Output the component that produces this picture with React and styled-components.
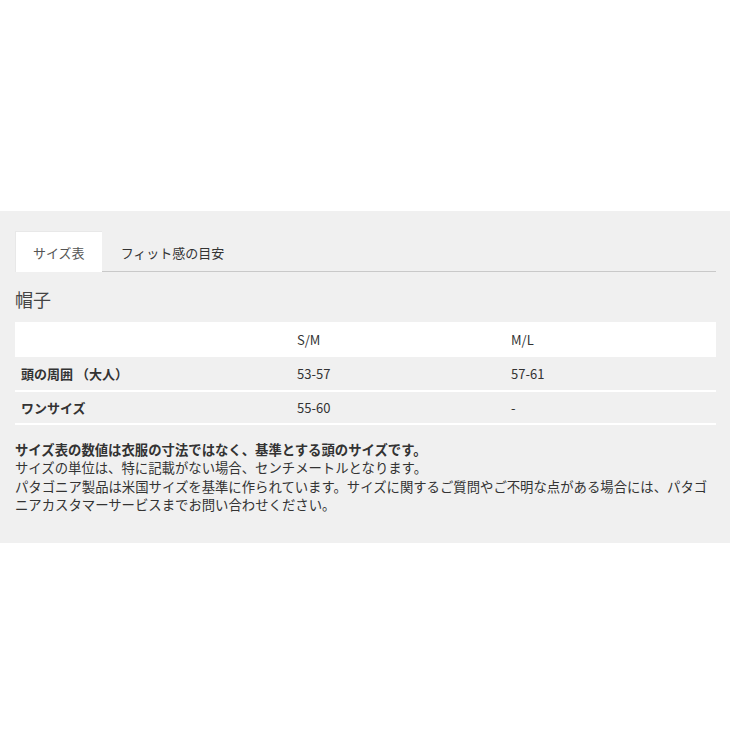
import React from "react";
import styled, { createGlobalStyle } from "styled-components";

const GlobalStyle = createGlobalStyle`
  html, body {
    margin: 0;
    padding: 0;
    background: #fff;
  }
  body {
    font-family: "Noto Sans CJK JP", "Noto Sans", sans-serif;
    color: #333;
  }
`;

const Page = styled.div`
  padding: 211px 0 186px;
  background: #fff;
`;

const Panel = styled.section`
  background: #f0f0f0;
  padding: 20px 14px 29px 15px;
`;

const TabBar = styled.div`
  display: flex;
  gap: 1px;
  border-bottom: 1px solid #c9c9c9;
  height: 40px;
`;

const Tab = styled.div`
  display: flex;
  align-items: center;
  height: 41px;
  box-sizing: border-box;
  padding: 0 17px;
  margin-bottom: -1px;
  font-size: 13px;
  color: ${(p) => (p.$active ? "#555" : "#333")};
  background: ${(p) => (p.$active ? "#fff" : "transparent")};
  border-top: 1px solid ${(p) => (p.$active ? "#e8e8e8" : "transparent")};
  border-left: 1px solid ${(p) => (p.$active ? "#e8e8e8" : "transparent")};
`;

const Heading = styled.h2`
  margin: 15px 0 11px;
  font-size: 18px;
  line-height: 24px;
  font-weight: 400;
  color: #444;
`;

const Table = styled.table`
  width: 100%;
  border-collapse: collapse;
  table-layout: fixed;
  font-size: 13px;
`;

const HeadRow = styled.tr`
  background: #fff;
  height: 35px;
`;

const BodyRow = styled.tr`
  border-bottom: 2px solid #fff;
  height: 33.5px;
`;

const Cell = styled.td`
  padding: 0 6px;
  vertical-align: middle;
  width: ${(p) => p.$w || "auto"};
  font-weight: ${(p) => (p.$bold ? 700 : 400)};
  color: #333;
`;

const Notes = styled.div`
  margin-top: 16px;
  font-size: 13.36px;
  line-height: 18.3px;
  color: #333;
`;

const Strong = styled.div`
  font-weight: 700;
`;

const rows = [
  ["頭の周囲 （大人）", "53-57", "57-61"],
  ["ワンサイズ", "55-60", "-"],
];

export default function App() {
  return (
    <>
      <GlobalStyle />
      <Page>
        <Panel>
          <TabBar>
            <Tab $active>サイズ表</Tab>
            <Tab>フィット感の目安</Tab>
          </TabBar>
          <Heading>帽子</Heading>
          <Table>
            <tbody>
              <HeadRow>
                <Cell $w="264px"></Cell>
                <Cell $w="202px">S/M</Cell>
                <Cell>M/L</Cell>
              </HeadRow>
              {rows.map((r) => (
                <BodyRow key={r[0]}>
                  <Cell $bold>{r[0]}</Cell>
                  <Cell>{r[1]}</Cell>
                  <Cell>{r[2]}</Cell>
                </BodyRow>
              ))}
            </tbody>
          </Table>
          <Notes>
            <Strong>サイズ表の数値は衣服の寸法ではなく、基準とする頭のサイズです。</Strong>
            <div>サイズの単位は、特に記載がない場合、センチメートルとなります。</div>
            <div>
              パタゴニア製品は米国サイズを基準に作られています。サイズに関するご質問やご不明な点がある場合には、パタゴニアカスタマーサービスまでお問い合わせください。
            </div>
          </Notes>
        </Panel>
      </Page>
    </>
  );
}
